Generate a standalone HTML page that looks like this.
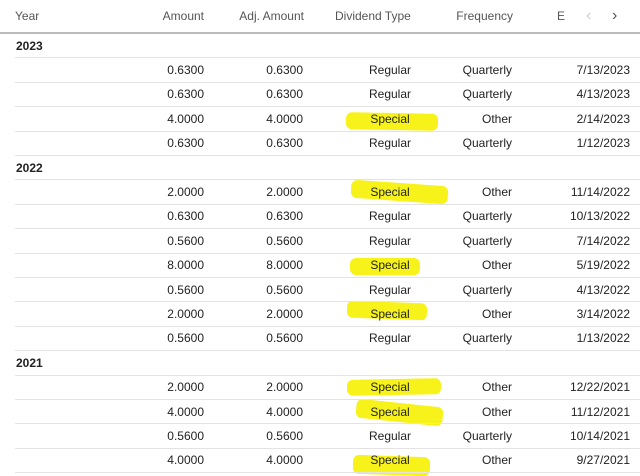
<!DOCTYPE html>
<html><head><style>
body{margin:0;width:640px;height:476px;overflow:hidden;background:#fff;font-family:"Liberation Sans",Arial,sans-serif;font-size:12px;color:#222;position:relative}
.hd{position:absolute;top:0;left:0;width:640px;height:34px;border-bottom:2px solid #bbb;box-sizing:border-box;color:#555}
.hd span,.r span{position:absolute;top:50%;transform:translateY(-50%);white-space:nowrap}
.r{position:absolute;left:15px;width:625px;height:24.4px;border-bottom:1px solid #e3e3e3;box-sizing:border-box}
.y{font-weight:bold;left:1px}
.a{right:436px}.b{right:337px}.c{left:375px;width:0;display:flex;justify-content:center}
.c i{font-style:normal}
.f{right:128px}.d{right:10px}
.hl{position:absolute;background:#f7f21a;border-radius:6px}
</style></head><body>
<div class="hd"><span style="left:15px">Year</span><span style="right:436px">Amount</span><span style="right:336px">Adj. Amount</span><span style="left:335px">Dividend Type</span><span style="right:127px">Frequency</span><span style="left:557px">E</span><span style="left:586px;color:#ccc;font-size:16px">&#8249;</span><span style="left:612px;color:#555;font-size:16px">&#8250;</span></div>
<div class="hl" style="left:346px;top:113px;width:92px;height:17px;transform:rotate(1deg)"></div>
<div class="hl" style="left:351px;top:183px;width:97px;height:18px;transform:rotate(4deg)"></div>
<div class="hl" style="left:350px;top:258px;width:70px;height:17px"></div>
<div class="hl" style="left:347px;top:302px;width:80px;height:17px;transform:rotate(2deg)"></div>
<div class="hl" style="left:347px;top:379px;width:94px;height:16px;transform:rotate(-1deg)"></div>
<div class="hl" style="left:356px;top:403px;width:87px;height:19px;transform:rotate(6deg)"></div>
<div class="hl" style="left:353px;top:456px;width:77px;height:19px;transform:rotate(2deg)"></div>
<div style="position:absolute;top:34px;left:0">
<div class="r" style="top:0"><span class="y">2023</span></div>
<div class="r" style="top:24.4px"><span class="a">0.6300</span><span class="b">0.6300</span><span class="c"><i>Regular</i></span><span class="f">Quarterly</span><span class="d">7/13/2023</span></div>
<div class="r" style="top:48.8px"><span class="a">0.6300</span><span class="b">0.6300</span><span class="c"><i>Regular</i></span><span class="f">Quarterly</span><span class="d">4/13/2023</span></div>
<div class="r" style="top:73.2px"><span class="a">4.0000</span><span class="b">4.0000</span><span class="c"><i>Special</i></span><span class="f">Other</span><span class="d">2/14/2023</span></div>
<div class="r" style="top:97.6px"><span class="a">0.6300</span><span class="b">0.6300</span><span class="c"><i>Regular</i></span><span class="f">Quarterly</span><span class="d">1/12/2023</span></div>
<div class="r" style="top:122px"><span class="y">2022</span></div>
<div class="r" style="top:146.4px"><span class="a">2.0000</span><span class="b">2.0000</span><span class="c"><i>Special</i></span><span class="f">Other</span><span class="d">11/14/2022</span></div>
<div class="r" style="top:170.8px"><span class="a">0.6300</span><span class="b">0.6300</span><span class="c"><i>Regular</i></span><span class="f">Quarterly</span><span class="d">10/13/2022</span></div>
<div class="r" style="top:195.2px"><span class="a">0.5600</span><span class="b">0.5600</span><span class="c"><i>Regular</i></span><span class="f">Quarterly</span><span class="d">7/14/2022</span></div>
<div class="r" style="top:219.6px"><span class="a">8.0000</span><span class="b">8.0000</span><span class="c"><i>Special</i></span><span class="f">Other</span><span class="d">5/19/2022</span></div>
<div class="r" style="top:244px"><span class="a">0.5600</span><span class="b">0.5600</span><span class="c"><i>Regular</i></span><span class="f">Quarterly</span><span class="d">4/13/2022</span></div>
<div class="r" style="top:268.4px"><span class="a">2.0000</span><span class="b">2.0000</span><span class="c"><i>Special</i></span><span class="f">Other</span><span class="d">3/14/2022</span></div>
<div class="r" style="top:292.8px"><span class="a">0.5600</span><span class="b">0.5600</span><span class="c"><i>Regular</i></span><span class="f">Quarterly</span><span class="d">1/13/2022</span></div>
<div class="r" style="top:317.2px"><span class="y">2021</span></div>
<div class="r" style="top:341.6px"><span class="a">2.0000</span><span class="b">2.0000</span><span class="c"><i>Special</i></span><span class="f">Other</span><span class="d">12/22/2021</span></div>
<div class="r" style="top:366px"><span class="a">4.0000</span><span class="b">4.0000</span><span class="c"><i>Special</i></span><span class="f">Other</span><span class="d">11/12/2021</span></div>
<div class="r" style="top:390.4px"><span class="a">0.5600</span><span class="b">0.5600</span><span class="c"><i>Regular</i></span><span class="f">Quarterly</span><span class="d">10/14/2021</span></div>
<div class="r" style="top:414.8px"><span class="a">4.0000</span><span class="b">4.0000</span><span class="c"><i>Special</i></span><span class="f">Other</span><span class="d">9/27/2021</span></div>
</div>
</body></html>
